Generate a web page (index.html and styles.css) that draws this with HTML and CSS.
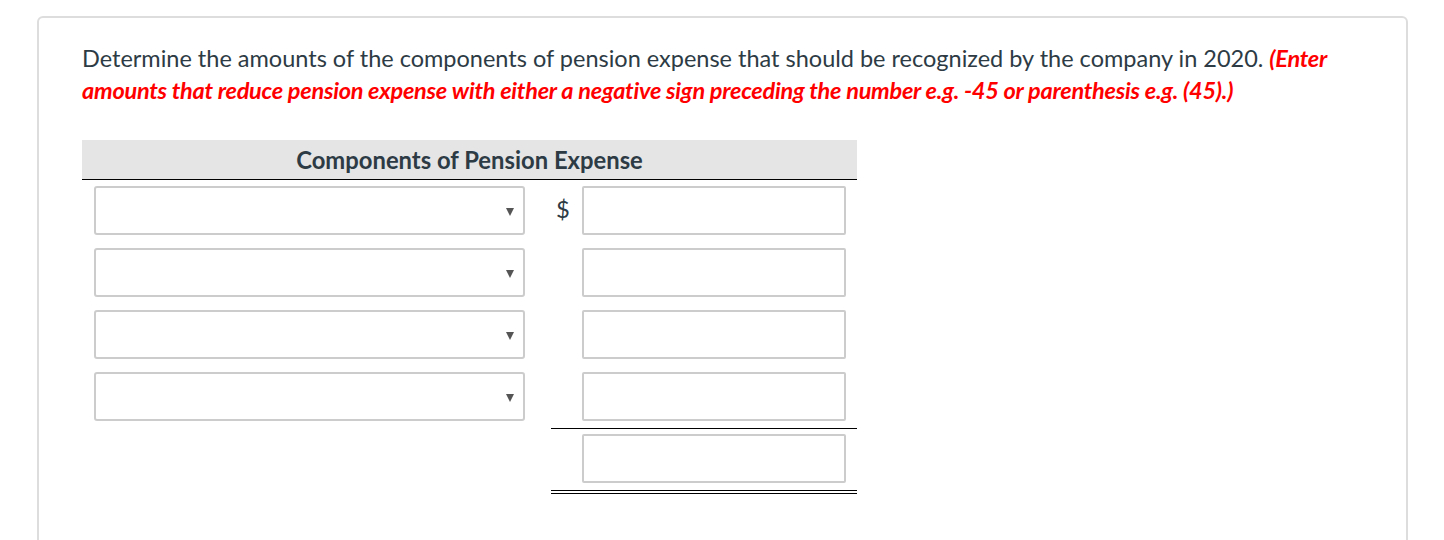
FILE: index.html
```html
<!DOCTYPE html>
<html>
<head>
<meta charset="utf-8">
<link rel="stylesheet" href="styles.css">
</head>
<body>
<div class="card">
  <p class="question">Determine the amounts of the components of pension expense that should be recognized by the company in 2020. <em class="hint">(Enter amounts that reduce pension expense with either a negative sign preceding the number e.g. -45 or parenthesis e.g. (45).)</em></p>
  <div class="sheet">
    <div class="head">Components of Pension Expense</div>
    <div class="row">
      <div class="c1"><div class="select"><span class="arrow"></span></div></div>
      <div class="c2">$</div>
      <div class="c3"><div class="input"></div></div>
    </div>
    <div class="row">
      <div class="c1"><div class="select"><span class="arrow"></span></div></div>
      <div class="c2"></div>
      <div class="c3"><div class="input"></div></div>
    </div>
    <div class="row">
      <div class="c1"><div class="select"><span class="arrow"></span></div></div>
      <div class="c2"></div>
      <div class="c3"><div class="input"></div></div>
    </div>
    <div class="row">
      <div class="c1"><div class="select"><span class="arrow"></span></div></div>
      <div class="c2"></div>
      <div class="c3"><div class="input"></div></div>
    </div>
    <div class="row total">
      <div class="c1"></div>
      <div class="c23">
        <div class="c2"></div>
        <div class="c3"><div class="input"></div></div>
      </div>
    </div>
  </div>
</div>
</body>
</html>
```
FILE: styles.css
```css
html, body {
  margin: 0;
  padding: 0;
  background: #fff;
}
body {
  padding: 16px 36px 0 37px;
  font-family: Lato, "Liberation Sans", sans-serif;
  color: #2d3b45;
}
.card {
  border: 2px solid #dddddd;
  border-radius: 6px;
  height: 600px;
  padding: 24px 43px 0 43px;
}
.question {
  margin: 0;
  font-size: 23.5px;
  line-height: 32px;
}
.hint {
  color: #ff0000;
  font-weight: bold;
  font-style: italic;
  letter-spacing: -0.25px;
}
.sheet {
  width: 775px;
  margin-top: 34px;
}
.head {
  background: #e5e5e5;
  height: 39px;
  line-height: 41px;
  text-align: center;
  font-size: 23.8px;
  font-weight: bold;
  border-bottom: 1px solid #000;
}
.row {
  display: flex;
  height: 62px;
  padding-top: 6px;
  box-sizing: border-box;
  align-items: flex-start;
}
.c1 {
  width: 469px;
  padding-left: 12px;
  box-sizing: border-box;
}
.c2 {
  width: 31px;
  font-size: 23.8px;
  line-height: 46px;
  padding-left: 5px;
  box-sizing: border-box;
}
.c3 {
  width: 275px;
}
.select {
  width: 431px;
  height: 49px;
  box-sizing: border-box;
  border: 2px solid #cccccc;
  border-radius: 3px;
  position: relative;
}
.arrow {
  position: absolute;
  right: 9px;
  top: 20px;
  width: 0;
  height: 0;
  border-left: 4px solid transparent;
  border-right: 4px solid transparent;
  border-top: 8px solid #555;
}
.input {
  width: 264px;
  height: 49px;
  box-sizing: border-box;
  border: 2px solid #cccccc;
  border-radius: 2px;
}
.row.total {
  height: auto;
  padding-top: 0;
}
.c23 {
  display: flex;
  border-top: 1px solid #000;
  border-bottom: 4px double #000;
  padding: 5px 0 7px 0;
}
```
